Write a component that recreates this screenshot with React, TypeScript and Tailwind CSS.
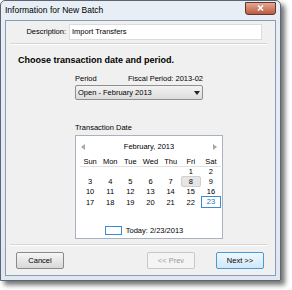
import React from "react";

const names = ["Sun", "Mon", "Tue", "Wed", "Thu", "Fri", "Sat"];
const weeks: string[][] = [
  ["", "", "", "", "", "1", "2"],
  ["3", "4", "5", "6", "7", "8", "9"],
  ["10", "11", "12", "13", "14", "15", "16"],
  ["17", "18", "19", "20", "21", "22", "23"],
];

function Calendar() {
  return (
    <div className="w-[148px] h-[104px] bg-white border border-[#a9b3bf] flex flex-col">
      <div className="flex items-center justify-between h-[16px] mt-[3px] px-[5px]">
        <svg width="4" height="6" viewBox="0 0 4 6"><path d="M4 0 L0 3 L4 6 Z" fill="#a8a8a8" /></svg>
        <span className="text-[7.5px] text-black">February, 2013</span>
        <svg width="4" height="6" viewBox="0 0 4 6"><path d="M0 0 L4 3 L0 6 Z" fill="#a8a8a8" /></svg>
      </div>
      <div className="ml-[4px] w-[141px] grid grid-cols-7 mt-[1px] h-[11px] items-center border-b border-[#e2e2e2]">
        {names.map((n) => (
          <span key={n} className="text-center text-[7.5px]">{n}</span>
        ))}
      </div>
      <div className="ml-[4px] w-[141px] -mt-[1px]">
        {weeks.map((w, i) => (
          <div key={i} className={"grid grid-cols-7 items-center " + (i === 3 ? "h-[9px]" : "h-[10px]")}>
            {w.map((d, j) => (
              <span
                key={j}
                className={
                  "text-center text-[7.5px] leading-[9px] " +
                  (d === "8"
                    ? "bg-[#e6e6e6] border border-[#cfcfcf] rounded-[2px]"
                    : d === "23"
                    ? "border border-[#3a8ad8] text-[#2b6fbf] leading-[10px]"
                    : "border border-transparent")
                }
              >
                {d}
              </span>
            ))}
          </div>
        ))}
      </div>
      <div className="flex items-center justify-center gap-[4px] mt-auto mb-[2px] ml-[-10px]">
        <div className="w-[17px] h-[9px] border border-[#3a8ad8]" />
        <span className="text-[7.5px]">Today: 2/23/2013</span>
      </div>
    </div>
  );
}

function Button({ label, kind }: { label: string; kind: "normal" | "disabled" | "default" }) {
  const cls =
    kind === "disabled"
      ? "border-[#c5c9cc] bg-[#f4f4f4] text-[#9a9a9a]"
      : kind === "default"
      ? "border-[#4a9ad6] bg-gradient-to-b from-[#f0f8fd] to-[#cfe8f8] text-black"
      : "border-[#8a8a8a] bg-gradient-to-b from-[#f6f6f6] to-[#d8d8d8] text-black";
  return (
    <div className={"w-[48px] h-[17px] border rounded-[2px] flex items-center justify-center text-[7.5px] " + cls}>
      {label}
    </div>
  );
}

export default function App() {
  return (
    <div className="w-[292px] h-[290px] bg-white" style={{ fontFamily: '"Liberation Sans", Arial, sans-serif' }}>
      <div className="w-[281px] h-[281px] border border-[#5c6670] rounded-t-[5px] bg-gradient-to-b from-[#e8eef6] to-[#dfe8f2] shadow-[4px_4px_5px_rgba(0,0,0,0.55)] flex flex-col">
        <div className="h-[19px] flex items-center justify-between pl-[4px] pr-[4px]">
          <span className="text-[8.5px] text-black">Information for New Batch</span>
          <div className="w-[31px] h-[13px] -mt-[5px] rounded-b-[3px] border border-[#5e3a2e] bg-gradient-to-b from-[#e3a893] to-[#bf5a3e] flex items-center justify-center">
            <svg width="7" height="6" viewBox="0 0 7 6">
              <path d="M1 0.5 L6 5.5 M6 0.5 L1 5.5" stroke="white" strokeWidth="1.6" />
            </svg>
          </div>
        </div>
        <div className="mx-[4px] mb-[4px] flex-1 border border-[#8d9cae] bg-[#f0f0f0] flex flex-col text-[7.5px] text-black">
          <div className="flex items-center mt-[3px] h-[16px]">
            <span className="w-[60px] text-right">Description:</span>
            <div className="ml-[3px] w-[193px] h-[16px] bg-white border border-[#dcdcdc] flex items-center pl-[2px]">
              Import Transfers
            </div>
          </div>
          <div className="ml-[4px] w-[257px] mt-[3px] h-[2px] border-t border-[#d5d5d5] border-b border-b-white" />
          <div className="ml-[12px] mt-[9px] text-[9px] font-bold leading-[12px]">Choose transaction date and period.</div>
          <div className="ml-[69px] mt-[8px] flex h-[10px] items-center">
            <span className="w-[53px]">Period</span>
            <span>Fiscal Period: 2013-02</span>
          </div>
          <div className="ml-[69px] mt-[1px] w-[128px] h-[15px] border border-[#8e8f8f] rounded-[2px] bg-gradient-to-b from-[#f3f3f3] to-[#dcdcdc] flex items-center justify-between px-[2px]">
            <span>Open - February 2013</span>
            <svg width="6" height="4" viewBox="0 0 6 4"><path d="M0 0 L6 0 L3 4 Z" fill="#222" /></svg>
          </div>
          <div className="ml-[69px] mt-[23px] h-[10px] flex items-center">Transaction Date</div>
          <div className="ml-[69px] mt-[2px]">
            <Calendar />
          </div>
          <div className="ml-[4px] w-[257px] mt-[5px] h-[2px] border-t border-[#d5d5d5] border-b border-b-white" />
          <div className="flex items-center mt-[6px] pl-[10px]">
            <Button label="Cancel" kind="normal" />
            <div className="ml-[83px]">
              <Button label="<< Prev" kind="disabled" />
            </div>
            <div className="ml-[21px]">
              <Button label="Next >>" kind="default" />
            </div>
          </div>
        </div>
      </div>
    </div>
  );
}
